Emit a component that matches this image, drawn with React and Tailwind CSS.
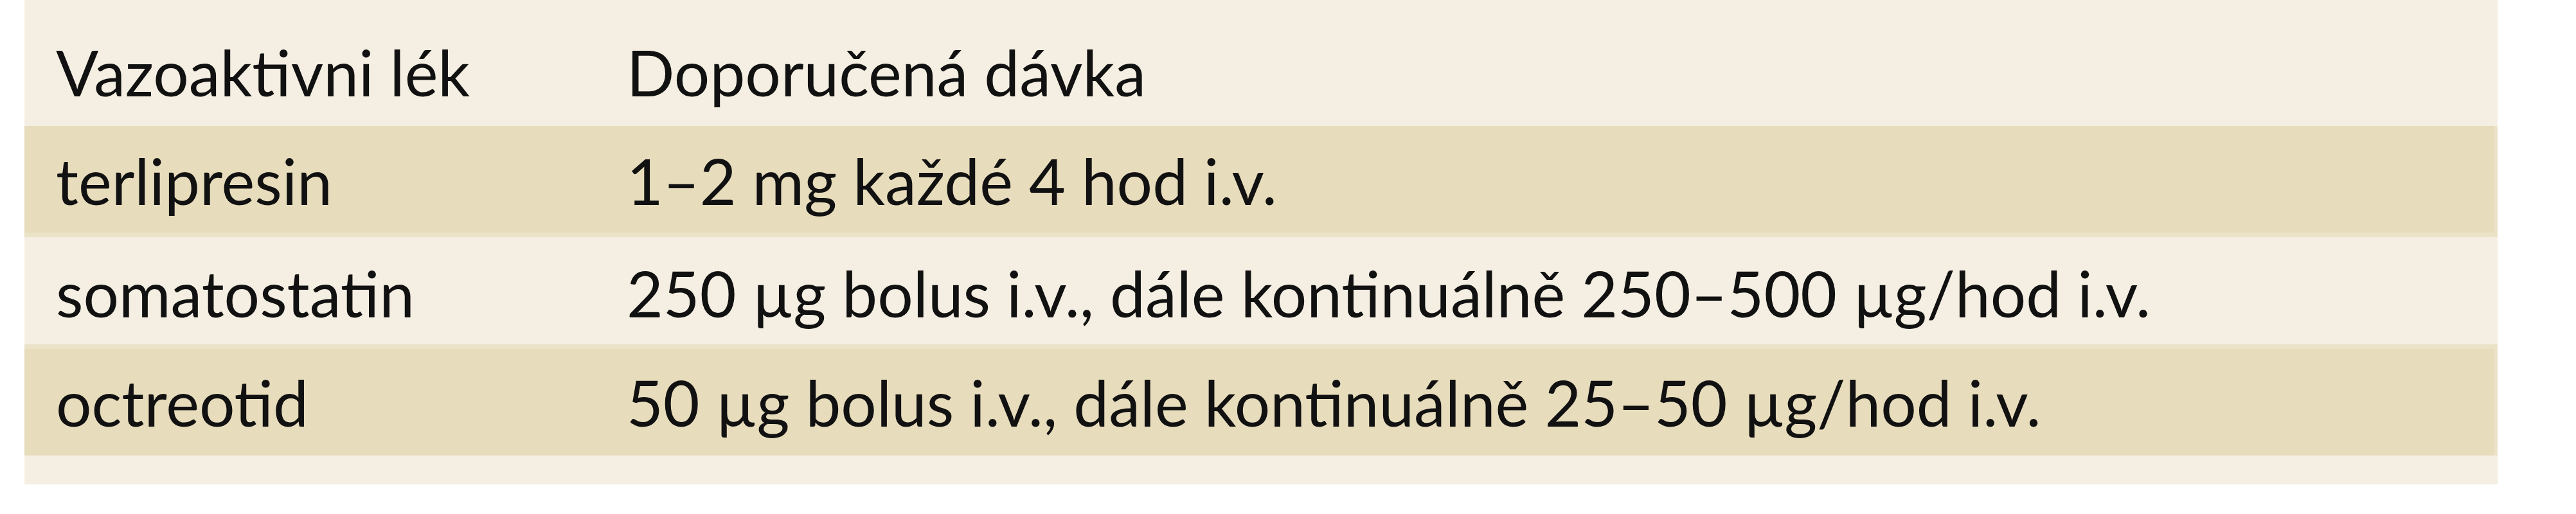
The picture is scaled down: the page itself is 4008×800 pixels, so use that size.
import React from "react";

const rows = [
  { drug: "terlipresin", dose: "1–2 mg každé 4 hod i.v.", shaded: true },
  { drug: "somatostatin", dose: "250 µg bolus i.v., dále kontinuálně 250–500 µg/hod i.v.", shaded: false },
  { drug: "octreotid", dose: "50 µg bolus i.v., dále kontinuálně 25–50 µg/hod i.v.", shaded: true },
];

export default function App() {
  return (
    <div className="min-h-screen w-full bg-white">
      <div
        className="ml-[38px] w-[3848px] bg-[#f4efe2] pb-[45px] text-[98px] text-[#111111]"
        style={{ fontFamily: "Lato, 'Liberation Sans', sans-serif" }}
      >
        <div className="grid h-[196px] grid-cols-[937px_1fr] pt-[28px] leading-[168px]">
          <div className="pl-[49px]">Vazoaktivni lék</div>
          <div>Doporučená dávka</div>
        </div>

        {rows.map((row, i) => (
          <div
            key={row.drug}
            className={
              i === 0
                ? "grid h-[173px] grid-cols-[937px_1fr] border-r-[6px] border-b-[7px] border-[#ebe2c8] bg-[#e7dcbc] pt-[4px] leading-[162px]"
                : i === 1
                ? "grid h-[167px] grid-cols-[937px_1fr] leading-[167px] pt-[4px]"
                : "grid h-[173px] grid-cols-[937px_1fr] border-r-[6px] border-t-[7px] border-[#ebe2c8] bg-[#e7dcbc] leading-[166px]"
            }
          >
            <div className="pl-[49px]">{row.drug}</div>
            <div>{row.dose}</div>
          </div>
        ))}
      </div>
    </div>
  );
}
